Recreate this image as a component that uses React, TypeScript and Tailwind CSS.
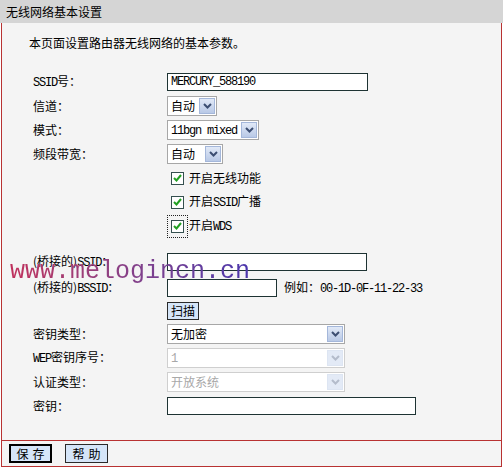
import React from 'react';

// Latin text in the reference is a narrow bitmap-like mono
function L({ children }: { children: React.ReactNode }) {
  return <span className="font-['Liberation_Mono',monospace] text-[12px] tracking-[-1.2px]">{children}</span>;
}

function Chevron({ disabled }: { disabled?: boolean }) {
  return (
    <svg width="9" height="6" viewBox="0 0 9 6">
      <path
        d="M1 1 L4.5 4.5 L8 1"
        fill="none"
        stroke={disabled ? '#b4bccb' : '#3c4e72'}
        strokeWidth="2"
      />
    </svg>
  );
}

function Select({ width, children, disabled }: { width: string; children: React.ReactNode; disabled?: boolean }) {
  return (
    <div
      className={`flex h-[20px] items-center justify-between bg-white border ${
        disabled ? 'border-[#cfcfcf] text-[#a8a8a8]' : 'border-[#a7a7a7] text-black'
      } ${width}`}
    >
      <span className="pl-[3px] leading-[18px]">{children}</span>
      <span
        className={`mr-px flex h-[16px] w-[16px] items-center justify-center border ${
          disabled
            ? 'border-[#dde5f2] bg-[#e3eaf6]'
            : 'border-[#a4b7da] bg-gradient-to-b from-[#e1e9f7] to-[#b9c9e6]'
        }`}
      >
        <Chevron disabled={disabled} />
      </span>
    </div>
  );
}

function Input({ width, children }: { width: string; children?: React.ReactNode }) {
  return (
    <div className={`flex h-[18px] items-center border border-[#1e3333] bg-white pl-[3px] ${width}`}>
      {children}
    </div>
  );
}

function Row({ label, children, className = 'h-6' }: { label: React.ReactNode; children: React.ReactNode; className?: string }) {
  return (
    <div className={`flex items-center ${className}`}>
      <div className="w-[165px] shrink-0 pl-[31px]">{label}</div>
      {children}
    </div>
  );
}

function Check({ label, focus }: { label: React.ReactNode; focus?: boolean }) {
  return (
    <div className="flex h-6 items-center pl-[165px]">
      <div
        className={`flex h-[23px] w-[21px] items-center justify-center border border-dotted ${
          focus ? 'border-[#222]' : 'border-transparent'
        }`}
      >
        <span className="flex h-[13px] w-[13px] items-center justify-center border border-[#35504f] bg-white">
          <svg width="9" height="8" viewBox="0 0 9 8">
            <path d="M1 4 L3.5 6.5 L8 1" fill="none" stroke="#22a022" strokeWidth="2" />
          </svg>
        </span>
      </div>
      <span className="pl-px">{label}</span>
    </div>
  );
}

export default function App() {
  return (
    <div className="relative h-[470px] w-[503px] overflow-hidden bg-white font-['Noto_Sans_CJK_SC',sans-serif] text-[12px] text-black">
      {/* Title bar */}
      <div className="h-[23px] bg-[#d5d5d5] pl-[6px] text-[12px] leading-[23px]">无线网络基本设置</div>

      {/* Form */}
      <div className="ml-px flex h-[418px] w-[501px] flex-col border-x border-b border-[#b83232] bg-[#f4f4f4] pt-[12px]">
        <div className="pl-[27px] leading-[16px]">本页面设置路由器无线网络的基本参数。</div>

        <div className="mt-[19px] flex flex-col">
          <Row label={<><L>SSID</L>号：</>}>
            <Input width="w-[201px]">
              <L>MERCURY_588190</L>
            </Input>
          </Row>
          <Row label="信道：">
            <Select width="w-[50px]">自动</Select>
          </Row>
          <Row label="模式：">
            <Select width="w-[92px]">
              <L>11bgn mixed</L>
            </Select>
          </Row>
          <Row label="频段带宽：">
            <Select width="w-[56px]">自动</Select>
          </Row>
          <Check label="开启无线功能" />
          <Check label={<>开启<L>SSID</L>广播</>} />
          <Check label={<>开启<L>WDS</L></>} focus />

          <Row label={<>(桥接的)<L>SSID</L>：</>} className="mt-[12px] h-6">
            <Input width="w-[200px]" />
          </Row>
          <Row label={<>(桥接的)<L>BSSID</L>：</>} className="mt-[2px] h-6">
            <Input width="w-[110px]" />
            <span className="pl-[7px]">
              例如：<L>00-1D-0F-11-22-33</L>
            </span>
          </Row>
          <Row label="" className="h-[22px]">
            <button className="h-[18px] w-[32px] border border-[#2a2a2a] bg-[#d5e5f8] leading-[16px]">扫描</button>
          </Row>
          <Row label="密钥类型：">
            <Select width="w-[178px]">无加密</Select>
          </Row>
          <Row label={<><L>WEP</L>密钥序号：</>}>
            <Select width="w-[178px]" disabled>
              <L>1</L>
            </Select>
          </Row>
          <Row label="认证类型：">
            <Select width="w-[178px]" disabled>
              开放系统
            </Select>
          </Row>
          <Row label="密钥：">
            <Input width="w-[249px]" />
          </Row>
        </div>
      </div>

      {/* Button bar */}
      <div className="ml-px flex h-[26px] w-[501px] items-center gap-[13px] border-x border-b border-[#b83232] bg-[#f4f4f4] pl-[7px]">
        <button className="h-[19px] w-[43px] border-2 border-black bg-[#d5e5f8] leading-[15px] tracking-[4px] pl-[4px]">保存</button>
        <button className="h-[19px] w-[43px] border border-[#2a2a2a] bg-[#d5e5f8] leading-[17px] tracking-[4px] pl-[4px]">帮助</button>
      </div>

      {/* Watermark */}
      <div className="pointer-events-none absolute left-[10px] top-[259px] bg-gradient-to-r from-[#c0305c] to-[#4b36ad] bg-clip-text font-['Liberation_Mono',monospace] text-[25px] leading-[25px] text-transparent">
        www.melogincn.cn
      </div>
    </div>
  );
}
